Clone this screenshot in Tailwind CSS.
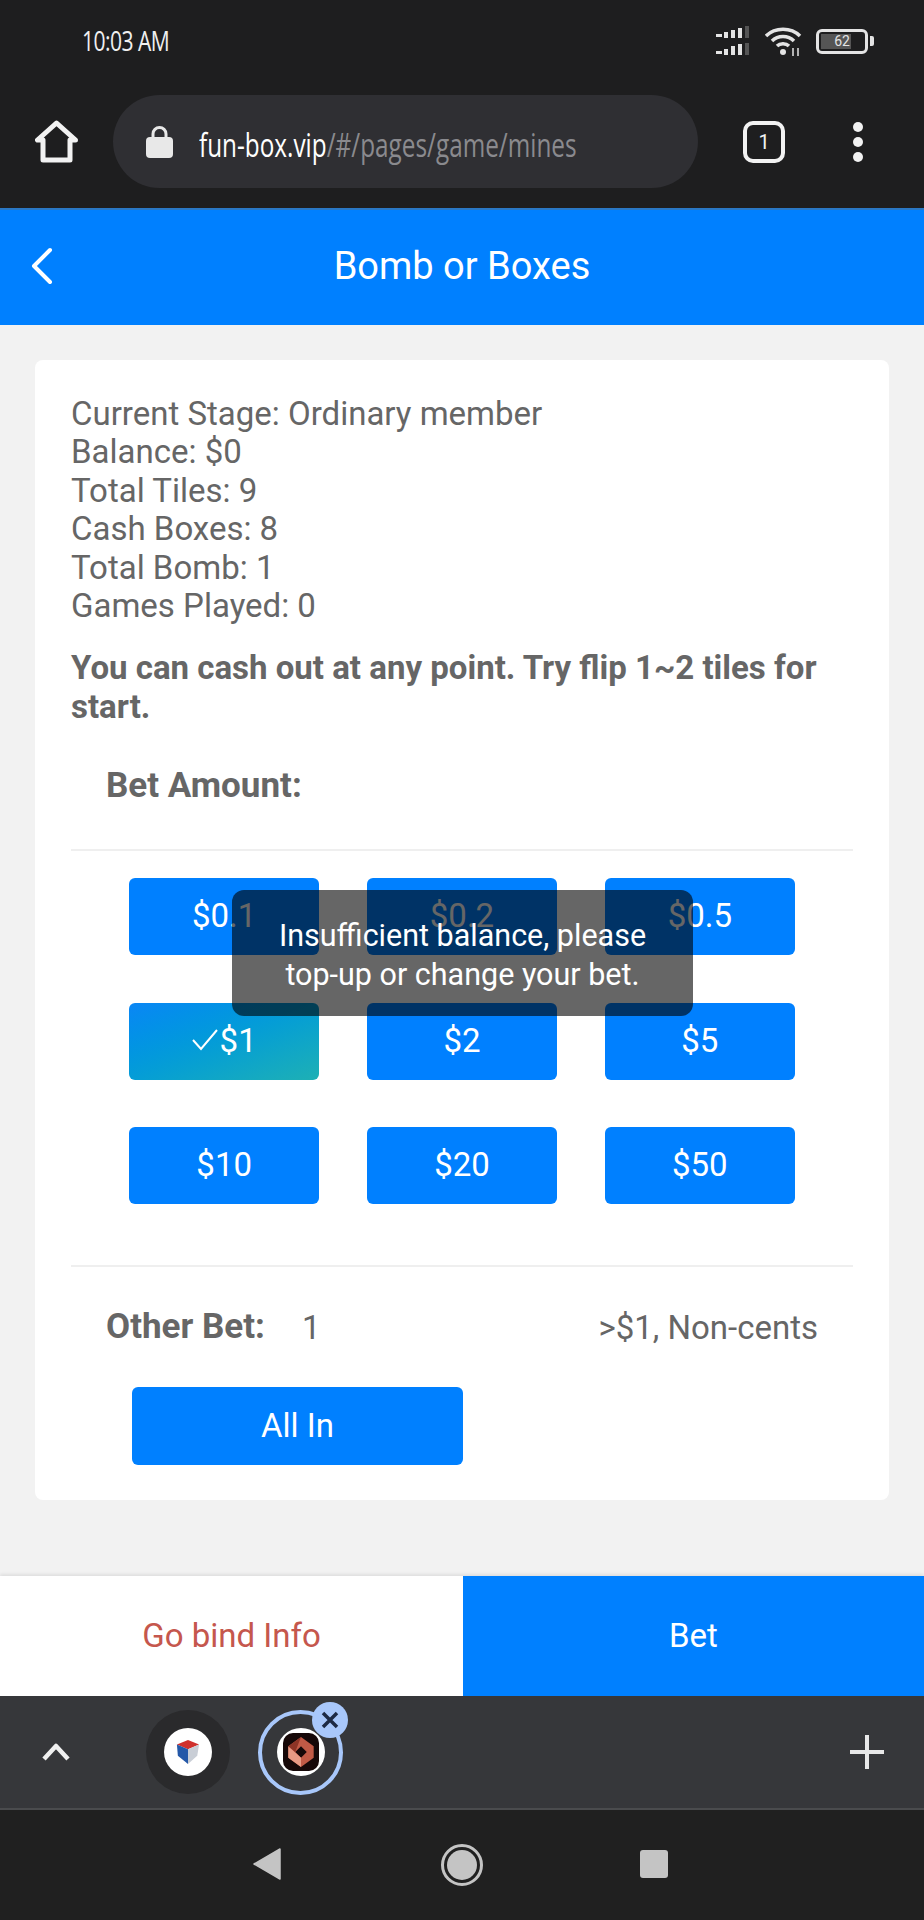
<!doctype html>
<html><head><meta charset="utf-8"><script src="https://cdn.jsdelivr.net/npm/@tailwindcss/browser@4"></script></head>
<body class="m-0">
<div class="relative w-[924px] h-[1920px] overflow-hidden flex flex-col bg-[#f2f2f2] font-['Roboto',sans-serif] text-[#666]">
  <!-- system + browser chrome -->
  <div class="h-[208px] shrink-0 bg-[#1e1e1f] flex flex-col">
    <div class="h-[82px] flex items-center pl-[82px] pr-[50px] justify-between">
      <span class="text-[#f0f0f0] text-[27px] font-['Open_Sans',sans-serif] font-normal inline-block scale-x-[0.78] origin-left tracking-tight">10:03 AM</span>
      <div class="flex items-center gap-[13px]">
        <svg width="36" height="30" viewBox="0 0 36 30" fill="#e4e4e4"><rect x="0" y="8" width="6" height="3"/><rect x="8" y="6" width="4" height="6"/><rect x="15" y="4" width="4" height="8"/><rect x="22" y="2" width="4" height="10"/><rect x="29" y="0" width="4" height="12" fill="#555"/><rect x="0" y="25" width="6" height="3"/><rect x="8" y="23" width="4" height="6"/><rect x="15" y="20" width="4" height="9"/><rect x="22" y="18" width="4" height="11"/><rect x="29" y="17" width="4" height="12" fill="#555"/></svg>
        <svg width="38" height="30" viewBox="0 0 38 30" fill="none" stroke="#e4e4e4" stroke-width="3.500"><path d="M1 10C10 1 26 1 35 10"/><path d="M7 15C13 9 23 9 29 15"/><path d="M12 20C15 17 21 17 24 20"/><circle cx="18" cy="26" r="3" fill="#e4e4e4" stroke="none"/><path d="M28 22v8M33 22v8" stroke-width="1.500"/></svg>
        <div class="flex items-center gap-[2px]">
          <div class="w-[52px] h-[25px] rounded-[6px] border-[3px] border-[#e4e4e4] p-[2px] relative">
            <div class="h-full w-[30px] bg-[#555]"></div>
            <span class="absolute inset-0 flex items-center justify-center text-[14px] leading-none text-[#e4e4e4]">62</span>
          </div>
          <div class="w-[4px] h-[10px] bg-[#e4e4e4] rounded-r-[2px]"></div>
        </div>
      </div>
    </div>
    <div class="flex items-center pl-[35px] mt-[13px]">
      <svg width="43" height="43" viewBox="0 0 43 43" fill="none" stroke="#f2f2f2" stroke-width="5" stroke-linejoin="round"><path d="M21.500 3L2.500 20H8V40H35V20H40.500Z"/></svg>
      <div class="ml-[35px] w-[585px] h-[93px] rounded-full bg-[#2f2f33] flex items-center pl-[33px]">
        <svg width="27" height="32" viewBox="0 0 27 32"><path d="M7 13V8a6.500 6.500 0 0 1 13 0v5" fill="none" stroke="#e8e8e8" stroke-width="3"/><rect x="0" y="11" width="27" height="21" rx="4" fill="#e8e8e8"/></svg>
        <span class="ml-[26px] mt-[6px] text-[32px] font-['Open_Sans',sans-serif] font-normal inline-block scale-x-[0.76] origin-left whitespace-nowrap text-white">fun-box.vip<span class="text-[#8a8a8e]">/#/pages/game/mines</span></span>
      </div>
      <div class="ml-[45px] w-[42px] h-[42px] rounded-[10px] border-[4px] border-[#f2f2f2] flex items-center justify-center text-[#f2f2f2] text-[20px] leading-none">1</div>
      <div class="ml-[68px] flex flex-col gap-[5px]">
        <div class="w-[10px] h-[10px] rounded-full bg-[#f2f2f2]"></div>
        <div class="w-[10px] h-[10px] rounded-full bg-[#f2f2f2]"></div>
        <div class="w-[10px] h-[10px] rounded-full bg-[#f2f2f2]"></div>
      </div>
    </div>
  </div>

  <!-- header -->
  <header class="h-[117px] shrink-0 bg-[#0080ff] border-t-[2px] border-[#2a78c4] relative flex items-center justify-center text-white text-[38px] pb-[3px]">
    <svg class="absolute left-[30px] top-[37px]" width="24" height="38" viewBox="0 0 24 38" fill="none" stroke="#fff" stroke-width="4" stroke-linecap="round" stroke-linejoin="round"><path d="M20 3L4 19L20 35"/></svg>
    <span>Bomb or Boxes</span>
  </header>

  <!-- card -->
  <main class="flex-1 px-[35px] pt-[35px]">
    <div class="h-[1140px] bg-white rounded-[8px] px-[36px] pt-[35px]">
      <div class="text-[33px] leading-[38.4px]">
        <div>Current Stage: Ordinary member</div>
        <div>Balance: $0</div>
        <div>Total Tiles: 9</div>
        <div>Cash Boxes: 8</div>
        <div>Total Bomb: 1</div>
        <div>Games Played: 0</div>
      </div>
      <p class="mt-[24px] text-[33px] leading-[38.4px] font-bold">You can cash out at any point. Try flip 1~2 tiles for start.</p>
      <div class="mt-[41px] pl-[35px] text-[35px] leading-[38px] font-bold">Bet Amount:</div>
      <div class="mt-[44px] border-t-2 border-[#efefef]"></div>
      <div class="mt-[27px] ml-[58px] w-[666px] grid grid-cols-3 gap-x-[47.500px] gap-y-[47.500px] text-[33px] text-white">
        <div class="h-[77px] rounded-[6px] bg-[#0080ff] flex items-center justify-center pb-[2px]">$0.1</div>
        <div class="h-[77px] rounded-[6px] bg-[#0080ff] flex items-center justify-center pb-[2px]">$0.2</div>
        <div class="h-[77px] rounded-[6px] bg-[#0080ff] flex items-center justify-center pb-[2px]">$0.5</div>
        <div class="h-[77px] rounded-[6px] bg-linear-to-br from-[#0b86f5] to-[#1eb0b4] flex items-center justify-center gap-[2px] pb-[2px]">
          <svg width="26" height="22" viewBox="0 0 26 22" fill="none" stroke="#fff" stroke-width="2"><path d="M1 11L9 20L25 1"/></svg><span>$1</span>
        </div>
        <div class="h-[77px] rounded-[6px] bg-[#0080ff] flex items-center justify-center pb-[2px]">$2</div>
        <div class="h-[77px] rounded-[6px] bg-[#0080ff] flex items-center justify-center pb-[2px]">$5</div>
        <div class="h-[77px] rounded-[6px] bg-[#0080ff] flex items-center justify-center pb-[2px]">$10</div>
        <div class="h-[77px] rounded-[6px] bg-[#0080ff] flex items-center justify-center pb-[2px]">$20</div>
        <div class="h-[77px] rounded-[6px] bg-[#0080ff] flex items-center justify-center pb-[2px]">$50</div>
      </div>
      <div class="mt-[61px] border-t-2 border-[#efefef]"></div>
      <div class="mt-[41px] pl-[35px] pr-[35px] flex items-center justify-between h-[38px]">
        <div class="flex items-center">
          <span class="text-[35px] font-bold">Other Bet:</span>
          <span class="ml-[37px] text-[33px]">1</span>
        </div>
        <span class="text-[33px]">&gt;$1, Non-cents</span>
      </div>
      <div class="mt-[41px] ml-[61px] w-[331px] h-[78px] rounded-[6px] bg-[#0080ff] text-white text-[33px] flex items-center justify-center pb-[2px]">All In</div>
    </div>
  </main>

  <!-- bottom action -->
  <div class="h-[120px] shrink-0 flex text-[33px] shadow-[0_-2px_3px_rgba(0,0,0,0.08)]">
    <div class="w-[463px] bg-white flex items-center justify-center text-[#c5574d]">Go bind Info</div>
    <div class="flex-1 bg-[#0080ff] flex items-center justify-center text-white">Bet</div>
  </div>

  <!-- tab group bar -->
  <div class="h-[114px] shrink-0 bg-[#36373a] border-b-2 border-[#4a4b4d] flex items-center relative">
    <svg class="ml-[42px]" width="28" height="18" viewBox="0 0 28 18" fill="none" stroke="#f0f0f0" stroke-width="4.500" stroke-linejoin="round"><path d="M2 16L14 3L26 16"/></svg>
    <div class="ml-[76px] w-[84px] h-[84px] rounded-full bg-[#2a2a2c] flex items-center justify-center">
      <div class="w-[48px] h-[48px] rounded-full bg-white flex items-center justify-center">
        <svg width="24" height="28" viewBox="0 0 26 28"><path d="M13 1L25 6L13 11L1 6Z" fill="#d0312d"/><path d="M1 6L13 11V27L2 18Z" fill="#2458a8"/><path d="M25 6L13 11V27L23 18Z" fill="#c9ced6"/></svg>
      </div>
    </div>
    <div class="relative ml-[28px] w-[85px] h-[85px] rounded-full border-[4px] border-[#a8c7fa] flex items-center justify-center">
      <div class="w-[48px] h-[48px] rounded-full bg-white flex items-center justify-center">
        <div class="w-[36px] h-[38px] rounded-[10px] bg-[#160808] flex items-center justify-center">
          <svg width="30" height="34" viewBox="0 0 26 28"><path d="M13 1L24 9V19L13 27L2 19V9Z" fill="#c25a46"/><path d="M13 9L18 14L13 19L8 14Z" fill="#160808"/><path d="M2 9L13 19V27L2 19Z" fill="#e89a84"/><path d="M13 1L8 14L2 9Z" fill="#8d3426"/></svg>
        </div>
      </div>
      <div class="absolute right-[-9px] top-[-12px] w-[36px] h-[36px] rounded-full bg-[#a8c7fa] flex items-center justify-center">
        <svg width="18" height="18" viewBox="0 0 18 18" fill="none" stroke="#1d2a44" stroke-width="3.500"><path d="M2 2L16 16M16 2L2 16"/></svg>
      </div>
    </div>
    <svg class="ml-auto mr-[40px]" width="34" height="34" viewBox="0 0 34 34" fill="none" stroke="#e8e8e8" stroke-width="4"><path d="M17 0V34M0 17H34"/></svg>
  </div>

  <!-- nav bar -->
  <div class="h-[110px] shrink-0 bg-[#202020] flex items-center justify-center relative">
    <svg class="absolute left-[253px] top-[38px]" width="29" height="32" viewBox="0 0 29 32"><path d="M27 1V31L1 16Z" fill="#c4c4c4" stroke="#c4c4c4" stroke-linejoin="round" stroke-width="1.500"/></svg>
    <div class="w-[42px] h-[42px] rounded-full border-[3px] border-[#c4c4c4] p-[3px]"><div class="w-full h-full rounded-full bg-[#c4c4c4]"></div></div>
    <div class="absolute left-[640px] top-[40px] w-[28px] h-[28px] rounded-[3px] bg-[#c4c4c4]"></div>
  </div>

  <!-- toast -->
  <div class="absolute left-[232px] top-[890px] w-[461px] h-[126px] rounded-[12px] bg-black/60 flex items-center justify-center text-center text-white text-[30.500px] leading-[39px] pt-[3px]">Insufficient balance, please<br>top-up or change your bet.</div>
</div>
</body></html>
